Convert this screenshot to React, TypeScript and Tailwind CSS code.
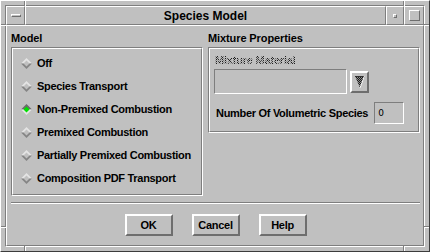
import React from "react";

function Diamond({ selected }: { selected?: boolean }) {
  return (
    <svg width="11" height="11" viewBox="0 0 11 11" className="shrink-0">
      <polygon points="5.5,0 11,5.5 0,5.5" fill={selected ? "#6a6a6a" : "#e4e4e4"} />
      <polygon points="0,5.5 11,5.5 5.5,11" fill={selected ? "#e4e4e4" : "#858585"} />
      <polygon
        points="5.5,2.5 8.5,5.5 5.5,8.5 2.5,5.5"
        fill={selected ? "#00e000" : "#c0c0c0"}
      />
    </svg>
  );
}

function Radio({ label, selected }: { label: string; selected?: boolean }) {
  return (
    <div className="flex h-[23px] items-center gap-[5px]">
      <Diamond selected={selected} />
      <span className="text-[11px] font-bold tracking-[-0.3px] text-black leading-none">{label}</span>
    </div>
  );
}

function Etched({ className, children }: { className?: string; children?: React.ReactNode }) {
  return (
    <div className={"border border-t-[#7e7e7e] border-l-[#7e7e7e] border-r-white border-b-white " + (className ?? "")}>
      <div className="h-full border border-t-white border-l-white border-r-[#7e7e7e] border-b-[#7e7e7e]">
        {children}
      </div>
    </div>
  );
}

function Button({ label }: { label: string }) {
  return (
    <div className="flex h-[22px] w-[48px] items-center justify-center border-2 border-t-white border-l-white border-r-[#6e6e6e] border-b-[#6e6e6e] bg-[#c0c0c0] text-[11px] font-bold tracking-[-0.3px] text-black">
      {label}
    </div>
  );
}

export default function App() {
  return (
    <div className="relative h-[252px] w-[430px] overflow-hidden border border-t-white border-l-white border-r-[#3c3c3c] border-b-[#3c3c3c] bg-[#c0c0c0] p-[4px] font-['Liberation_Sans',Arial,sans-serif] text-black">
      {/* corner resize marks */}
      <div className="absolute left-[23px] top-0 h-[5px] w-[2px] border-l border-l-[#7e7e7e] border-r border-r-white" />
      <div className="absolute right-[24px] top-0 h-[5px] w-[2px] border-l border-l-[#7e7e7e] border-r border-r-white" />
      <div className="absolute left-[23px] bottom-0 h-[5px] w-[2px] border-l border-l-[#7e7e7e] border-r border-r-white" />
      <div className="absolute right-[24px] bottom-0 h-[5px] w-[2px] border-l border-l-[#7e7e7e] border-r border-r-white" />
      <div className="absolute left-0 top-[23px] h-[2px] w-[5px] border-t border-t-[#7e7e7e] border-b border-b-white" />
      <div className="absolute right-0 top-[23px] h-[2px] w-[5px] border-t border-t-[#7e7e7e] border-b border-b-white" />
      <div className="absolute left-0 bottom-[23px] h-[2px] w-[5px] border-t border-t-[#7e7e7e] border-b border-b-white" />
      <div className="absolute right-0 bottom-[23px] h-[2px] w-[5px] border-t border-t-[#7e7e7e] border-b border-b-white" />

      <div className="flex h-full flex-col border border-t-[#7e7e7e] border-l-[#7e7e7e] border-r-white border-b-white">
        {/* title bar */}
        <div className="flex h-[19px] shrink-0">
          <div className="flex w-[19px] items-center justify-center border border-t-white border-l-white border-r-[#7e7e7e] border-b-[#7e7e7e]">
            <div className="h-[3px] w-[10px] border border-t-white border-l-white border-r-[#6e6e6e] border-b-[#6e6e6e]" />
          </div>
          <div className="flex flex-1 items-center justify-center border border-t-white border-l-white border-r-[#7e7e7e] border-b-[#7e7e7e] text-[12px] font-bold leading-none">
            Species Model
          </div>
          <div className="flex w-[18px] items-center justify-center border border-t-white border-l-white border-r-[#7e7e7e] border-b-[#7e7e7e]">
            <div className="h-[4px] w-[4px] border border-t-white border-l-white border-r-[#6e6e6e] border-b-[#6e6e6e]" />
          </div>
          <div className="flex w-[20px] items-center justify-center border border-t-white border-l-white border-r-[#7e7e7e] border-b-[#7e7e7e]">
            <div className="h-[11px] w-[11px] border border-t-white border-l-white border-r-[#6e6e6e] border-b-[#6e6e6e]" />
          </div>
        </div>

        {/* client */}
        <div className="flex flex-1 flex-col border border-t-white border-l-white border-r-[#7e7e7e] border-b-[#7e7e7e] pl-[4px] pr-[3px] pt-[5px]">
          <div className="flex gap-[5px]">
            <div className="w-[192px]">
              <div className="h-[14px] text-[11px] font-bold leading-[14px] tracking-[-0.1px]">Model</div>
              <Etched className="mt-[2px] h-[149px]">
                <div className="flex flex-col pl-[8px] pt-[3px]">
                  <Radio label="Off" />
                  <Radio label="Species Transport" />
                  <Radio label="Non-Premixed Combustion" selected />
                  <Radio label="Premixed Combustion" />
                  <Radio label="Partially Premixed Combustion" />
                  <Radio label="Composition PDF Transport" />
                </div>
              </Etched>
            </div>
            <div className="w-[212px]">
              <div className="h-[14px] text-[11px] font-bold leading-[14px] tracking-[-0.1px]">Mixture Properties</div>
              <Etched className="mt-[2px] h-[86px]">
                <div className="flex flex-col pl-[4px] pt-[4px]">
                  <div className="ml-[1px] h-[14px] w-fit bg-[repeating-conic-gradient(#1e1e1e_0%_25%,#b4b4b4_0%_50%)] bg-[length:2px_2px] bg-clip-text text-[11px] font-bold leading-[14px] tracking-[-0.2px] text-transparent">
                    Mixture Material
                  </div>
                  <div className="mt-[2px] flex items-center gap-[3px]">
                    <div className="h-[25px] w-[133px] border border-t-[#7e7e7e] border-l-[#7e7e7e] border-r-white border-b-white" />
                    <div className="flex h-[22px] w-[19px] items-center justify-center border-2 border-t-white border-l-white border-r-[#6e6e6e] border-b-[#6e6e6e]">
                      <svg width="10" height="12" viewBox="0 0 10 12">
                        <defs>
                          <pattern id="chk" width="2" height="2" patternUnits="userSpaceOnUse">
                            <rect width="2" height="2" fill="#8a8a8a" />
                            <rect width="1" height="1" fill="#1a1a1a" />
                            <rect x="1" y="1" width="1" height="1" fill="#1a1a1a" />
                          </pattern>
                        </defs>
                        <polygon points="0,0 10,0 5,12" fill="url(#chk)" />
                        <line x1="0" y1="0.5" x2="10" y2="0.5" stroke="#303030" />
                        <line x1="9.5" y1="0" x2="5" y2="12" stroke="#ffffff" />
                      </svg>
                    </div>
                  </div>
                  <div className="mt-[8px] flex items-center gap-[6px] pl-[2px]">
                    <span className="text-[11px] font-bold leading-none tracking-[-0.3px]">Number Of Volumetric Species</span>
                    <div className="flex h-[22px] w-[30px] items-center border border-t-[#7e7e7e] border-l-[#7e7e7e] border-r-white border-b-white pl-[3px] text-[9px] leading-none font-['DejaVu_Sans',sans-serif]">
                      0
                    </div>
                  </div>
                </div>
              </Etched>
            </div>
          </div>

          {/* separator */}
          <div className="mt-[6px] h-[2px] border-t border-t-[#7e7e7e] border-b border-b-white" />

          <div className="mt-[10px] flex justify-center gap-[19px]">
            <Button label="OK" />
            <Button label="Cancel" />
            <Button label="Help" />
          </div>
        </div>
      </div>
    </div>
  );
}
